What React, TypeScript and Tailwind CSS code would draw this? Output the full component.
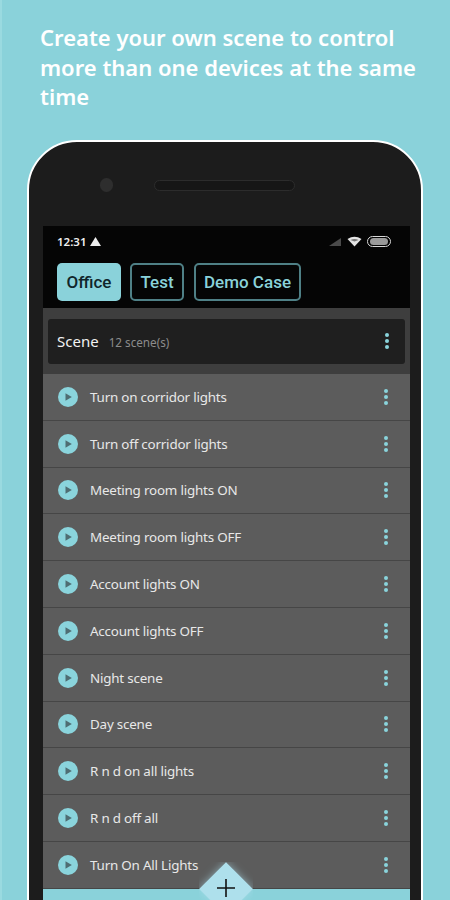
const scenes = [
  'Turn on corridor lights',
  'Turn off corridor lights',
  'Meeting room lights ON',
  'Meeting room lights OFF',
  'Account lights ON',
  'Account lights OFF',
  'Night scene',
  'Day scene',
  'R n d on all lights',
  'R n d off all',
  'Turn On All Lights',
]

function Dots() {
  return (
    <div className="flex flex-col gap-[2px]">
      <span className="h-1 w-1 rounded-full bg-[#8ad4dc]" />
      <span className="h-1 w-1 rounded-full bg-[#8ad4dc]" />
      <span className="h-1 w-1 rounded-full bg-[#8ad4dc]" />
    </div>
  )
}

function PlayIcon() {
  return (
    <svg width="20" height="20" viewBox="0 0 20 20" className="shrink-0">
      <circle cx="10" cy="10" r="10" fill="#8ad4dc" />
      <path d="M7.5 6.2 L13.8 10 L7.5 13.8 Z" fill="#4f6d72" />
    </svg>
  )
}

function StatusIcons() {
  return (
    <div className="flex items-center gap-[5px]">
      <svg width="14" height="10" viewBox="0 0 14 10">
        <path d="M1 9 L13 9 L13 1 Z" fill="#4a4a4a" />
      </svg>
      <svg width="15" height="11" viewBox="0 0 15 11">
        <path d="M0.5 3 Q7.5 -1.5 14.5 3 L7.5 10.5 Z" fill="#e4e4e4" />
        <path d="M3.4 4 Q7.5 1.8 11.6 4 L7.5 5.6 Z" fill="#777" />
      </svg>
      <div className="flex h-[11px] w-6 items-center justify-center rounded-full border border-[#d8d8d8] px-[2px]">
        <div className="h-[7px] w-full rounded-full bg-[#9a9a9a]" />
      </div>
    </div>
  )
}

export default function App() {
  return (
    <div className="h-[900px] w-[450px] overflow-hidden bg-[#8ad2da] font-['Noto_Sans',sans-serif] shadow-[inset_2px_0_0_#9adae0]">
      <h1 className="pt-[23px] pr-[30px] pl-10 text-[22px] leading-[29.5px] font-semibold text-white">
        Create your own scene to control more than one devices at the same time
      </h1>

      <div className="mx-auto mt-[28px] h-[900px] w-[396px] rounded-t-[50px] border-2 border-white bg-[#1c1c1c] px-[14px] pt-[84px]">
        <div className="relative">
          {/* camera and speaker */}
          <div className="absolute top-[-48px] left-[57px] h-[14px] w-[13px] rounded-full bg-[#2e2e2e]" />
          <div className="absolute top-[-46px] left-[111px] h-[11px] w-[141px] rounded-full border border-[#2c2c2c] bg-[#161616]" />

          <div className="w-[367px]">
            <div className="h-[82px] bg-[#050505] px-[14px] pt-[8px]">
              <div className="flex h-[16px] items-center justify-between pr-[5px]">
                <div className="flex items-center gap-[3px]">
                  <span className="text-[11.5px] font-semibold text-[#eeeeee]">12:31</span>
                  <svg width="11" height="9" viewBox="0 0 11 9">
                    <path d="M5.5 0 L11 9 L0 9 Z" fill="#eeeeee" />
                  </svg>
                </div>
                <StatusIcons />
              </div>
              <div className="mt-[13px] flex gap-[9px]">
                <div className="flex h-[38px] w-[64px] items-center justify-center rounded-[5px] bg-[#8ad2da] pt-[2px] font-['Roboto',sans-serif] text-[17px] font-medium text-[#10262b]">
                  Office
                </div>
                <div className="flex h-[38px] w-[54px] items-center justify-center rounded-[5px] border-2 border-[#4f8086] pt-[2px] font-['Roboto',sans-serif] text-[17px] font-medium text-[#8ad2da]">
                  Test
                </div>
                <div className="ml-px flex h-[38px] w-[107px] items-center justify-center rounded-[5px] border-2 border-[#4f8086] pt-[2px] font-['Roboto',sans-serif] text-[17px] font-medium text-[#8ad2da]">
                  Demo Case
                </div>
              </div>
            </div>

            <div className="h-[66.5px] bg-[#3e3e3e] px-[5px] pt-[11px]">
              <div className="flex h-[45px] items-center justify-between rounded-[3px] bg-[#1f1f1f] pr-[16px] pl-[9px]">
                <div className="flex items-baseline gap-[10px]">
                  <span className="text-[15px] text-[#f2f2f2]">Scene</span>
                  <span className="text-[11.7px] text-[#8c8c8c]">12 scene(s)</span>
                </div>
                <Dots />
              </div>
            </div>

            <div className="bg-[#5c5c5c]">
              {scenes.map((name) => (
                <div
                  key={name}
                  className="flex h-[46.8px] items-center justify-between border-b border-[#464646] pr-[22px] pl-[15px]"
                >
                  <div className="flex items-center gap-[12px]">
                    <PlayIcon />
                    <span className="text-[13.4px] tracking-[-0.2px] text-[#e8e8e8]">{name}</span>
                  </div>
                  <Dots />
                </div>
              ))}
            </div>

            <div className="relative h-[40px] bg-[#8ad2da]">
              <div className="absolute top-[-27px] left-[156px] h-[54px] w-[54px] overflow-hidden">
                <div className="absolute top-[8px] left-[8px] h-[38px] w-[38px] rotate-45 bg-[#aee0ec] shadow-[0_0_8px_rgba(174,224,236,0.6)]" />
                <svg width="20" height="20" viewBox="0 0 20 20" className="absolute top-[16px] left-[17px]">
                  <path d="M10 1 V19 M1 10 H19" stroke="#111" strokeWidth="1.6" />
                </svg>
              </div>
            </div>
          </div>
        </div>
      </div>
    </div>
  )
}
